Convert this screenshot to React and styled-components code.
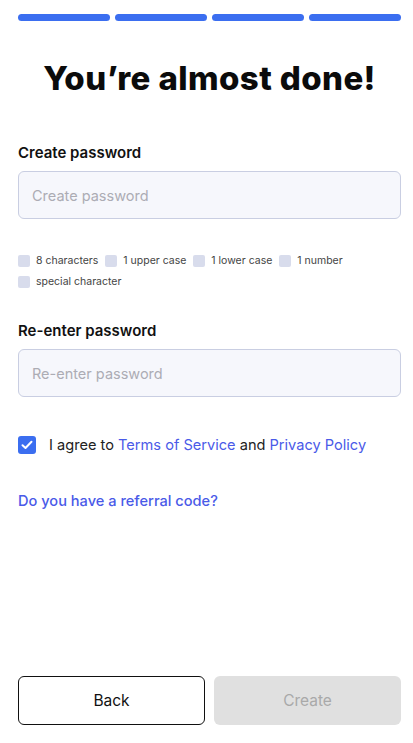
import React from "react";
import styled, { createGlobalStyle } from "styled-components";

const GlobalStyle = createGlobalStyle`
  html, body { margin: 0; padding: 0; background: #fff; }
  body { font-family: Inter, "Noto Sans", sans-serif; color: #111; }
  * { box-sizing: border-box; }
`;

const Page = styled.div`
  min-height: 100vh;
  display: flex;
  flex-direction: column;
  padding: 14px 12px 18px 18px;
`;

const Progress = styled.div`
  display: grid;
  grid-template-columns: repeat(4, 1fr);
  gap: 5px;
`;

const Step = styled.div`
  height: 7px;
  border-radius: 4px;
  background: ${(p) => (p.$active ? "#3b6ef0" : "#dde2f0")};
`;

const Title = styled.h1`
  margin: 37px 0 0;
  text-align: center;
  font-size: 33px;
  font-weight: 800;
  letter-spacing: 0.4px;
  color: #0b0b0b;
`;

const Label = styled.label`
  display: block;
  margin-top: ${(p) => p.$top}px;
  font-size: 15px;
  font-weight: 600;
  color: #111;
`;

const Input = styled.input`
  width: 100%;
  height: 48px;
  margin-top: 9px;
  padding: 0 13px;
  border: 1px solid #c9cee2;
  border-radius: 6px;
  background: #f6f7fc;
  font-family: inherit;
  font-size: 14.5px;
  outline: none;
  &::placeholder { color: #acacb4; }
`;

const Rules = styled.div`
  display: flex;
  flex-wrap: wrap;
  gap: 8px 7px;
  margin-top: 35px;
`;

const Rule = styled.span`
  display: inline-flex;
  align-items: center;
  gap: 6px;
  font-size: 10.5px;
  color: #444;
`;

const RuleBox = styled.span`
  width: 12px;
  height: 12px;
  border-radius: 2px;
  background: #d8dcec;
`;

const Agree = styled.div`
  display: flex;
  align-items: center;
  gap: 13px;
  margin-top: 39px;
  font-size: 14.6px;
  color: #222;
`;

const Check = styled.span`
  width: 18px;
  height: 18px;
  border-radius: 3px;
  background: #3b6ef0;
  display: flex;
  align-items: center;
  justify-content: center;
`;

const Link = styled.a`
  color: #4a5ae8;
  text-decoration: none;
`;

const Referral = styled(Link)`
  display: block;
  margin-top: 38px;
  font-size: 14.6px;
  font-weight: 500;
`;

const Footer = styled.div`
  margin-top: auto;
  display: grid;
  grid-template-columns: 1fr 1fr;
  gap: 9px;
`;

const Button = styled.button`
  height: 49px;
  border-radius: 6px;
  font-family: inherit;
  font-size: 15.5px;
  border: ${(p) => (p.$disabled ? "none" : "1px solid #111")};
  background: ${(p) => (p.$disabled ? "#e0e0e0" : "#fff")};
  color: ${(p) => (p.$disabled ? "#a9a9a9" : "#111")};
`;

const rules = ["8 characters", "1 upper case", "1 lower case", "1 number", "special character"];

export default function App() {
  return (
    <>
      <GlobalStyle />
      <Page>
        <Progress>
          {[0, 1, 2, 3].map((i) => (
            <Step key={i} $active />
          ))}
        </Progress>
        <Title>You’re almost done!</Title>

        <Label $top={45}>Create password</Label>
        <Input placeholder="Create password" type="password" />

        <Rules>
          {rules.map((r) => (
            <Rule key={r}>
              <RuleBox />
              {r}
            </Rule>
          ))}
        </Rules>

        <Label $top={33}>Re-enter password</Label>
        <Input placeholder="Re-enter password" type="password" />

        <Agree>
          <Check>
            <svg width="12" height="10" viewBox="0 0 12 10">
              <path d="M1.5 5.2 L4.5 8 L10.5 1.8" fill="none" stroke="#fff" strokeWidth="2" strokeLinecap="round" strokeLinejoin="round" />
            </svg>
          </Check>
          <span>
            I agree to <Link>Terms of Service</Link> and <Link>Privacy Policy</Link>
          </span>
        </Agree>

        <Referral>Do you have a referral code?</Referral>

        <Footer>
          <Button>Back</Button>
          <Button $disabled>Create</Button>
        </Footer>
      </Page>
    </>
  );
}
